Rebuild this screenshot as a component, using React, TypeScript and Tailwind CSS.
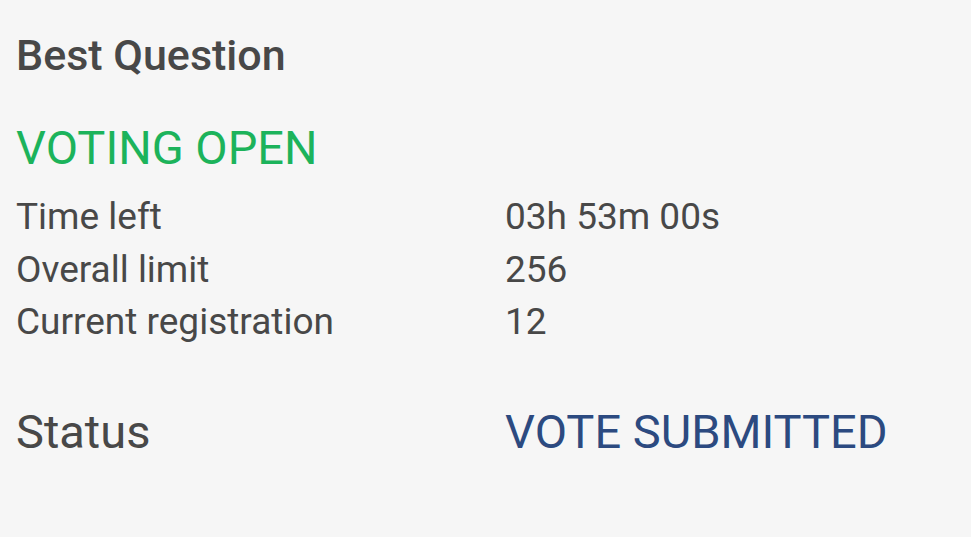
export default function App() {
    const rows = [
        { label: "Time left", value: "03h 53m 00s" },
        { label: "Overall limit", value: "256" },
        { label: "Current registration", value: "12" },
    ];

    return (
        <div className="w-[971px] h-[537px] bg-[#f6f6f6] text-[#484848] font-['Roboto',sans-serif] pl-[16px] pt-[29px]">
            <h1 className="text-[43px] font-medium leading-[52px]">Best Question</h1>
            <div className="mt-[39px] text-[47px] leading-[56px] text-[#1cb35b]">VOTING OPEN</div>
            <div className="mt-[15px]">
                {rows.map((r) => (
                    <div key={r.label} className="grid grid-cols-[489px_1fr] text-[37px] leading-[52.5px]">
                        <span>{r.label}</span>
                        <span>{r.value}</span>
                    </div>
                ))}
            </div>
            <div className="mt-[55px] grid grid-cols-[489px_1fr] text-[47px] leading-[56px]">
                <span>Status</span>
                <span className="text-[#2c4a80]">VOTE SUBMITTED</span>
            </div>
        </div>
    );
}
